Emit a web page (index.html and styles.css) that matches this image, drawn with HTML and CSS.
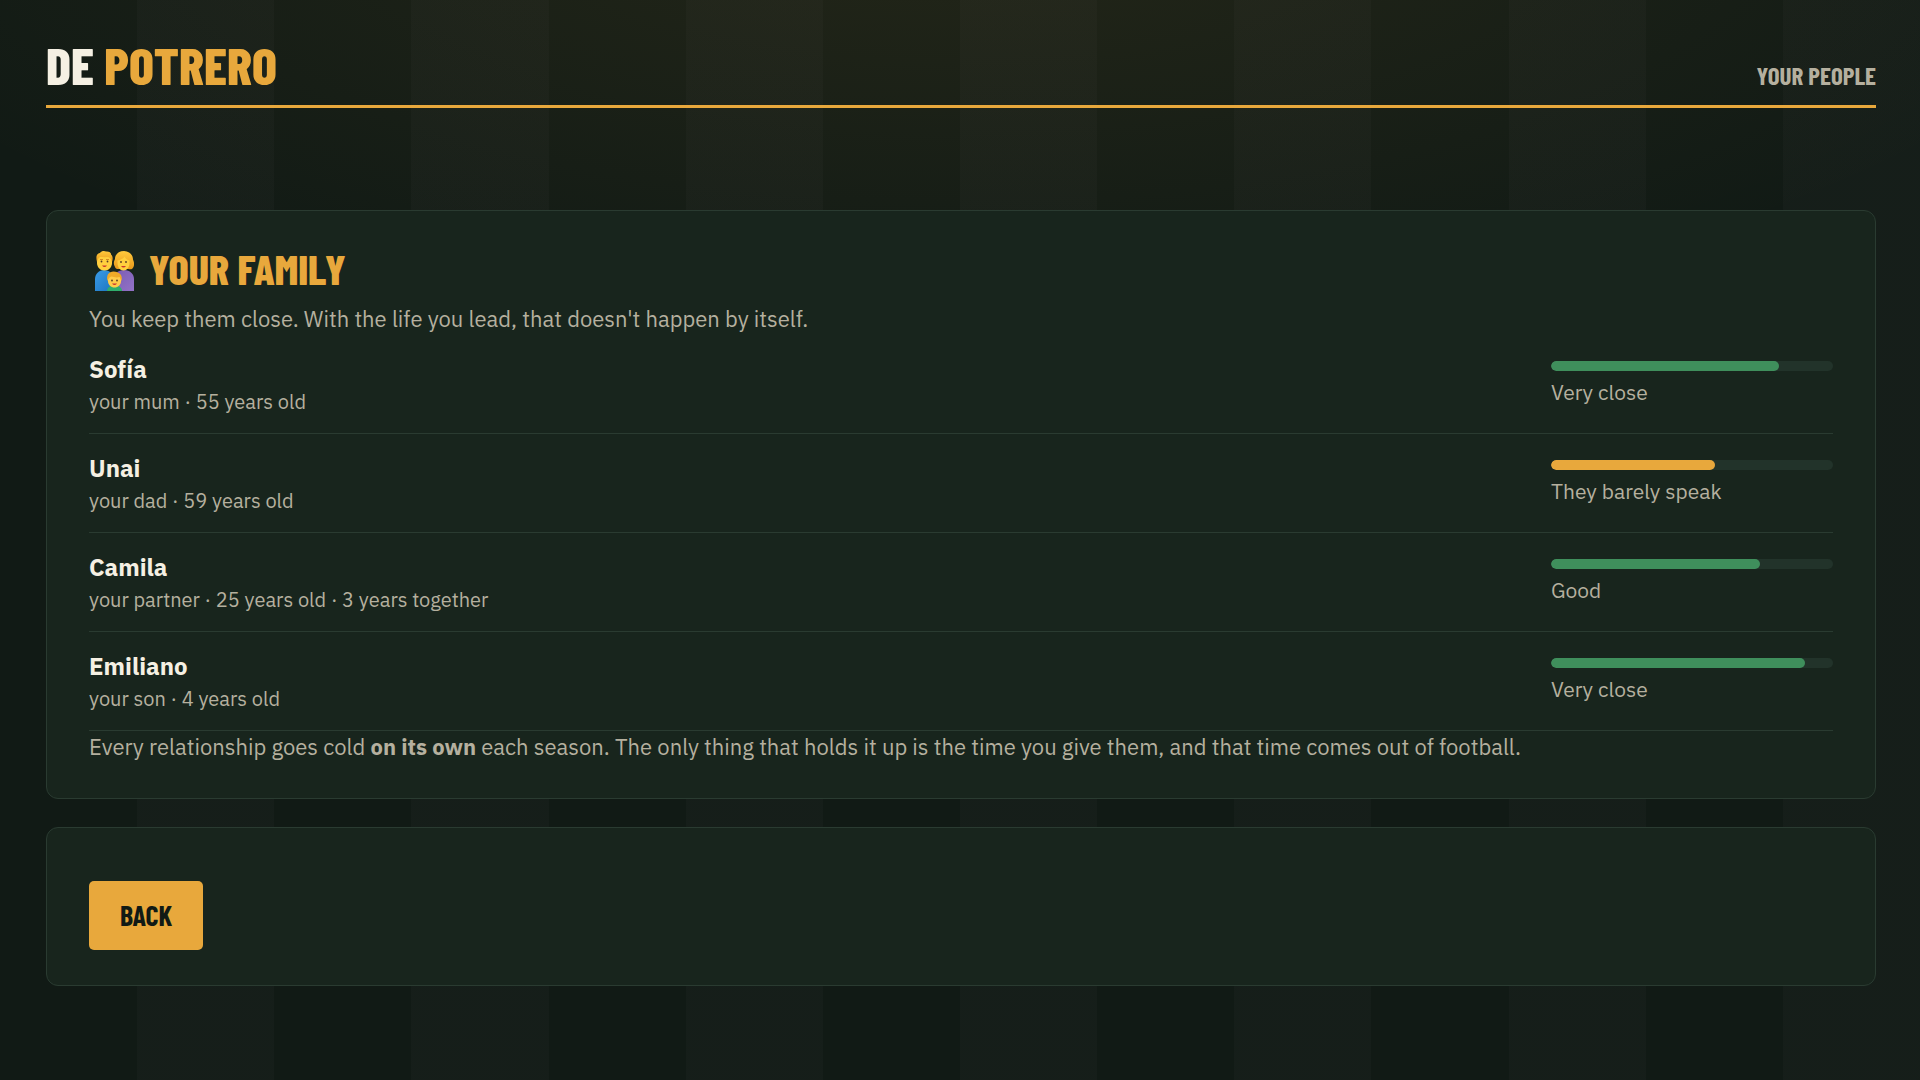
FILE: index.html
```html
<!DOCTYPE html>
<html lang="en">
<head>
    <meta charset="UTF-8">
    <meta name="viewport" content="width=device-width, initial-scale=1.0">
    <title>De Potrero</title>
    <link rel="stylesheet" href="styles.css">
</head>
<body>
    <header class="topbar">
        <h1 class="brand">DE <span>POTRERO</span></h1>
        <div class="section-name">YOUR PEOPLE</div>
    </header>

    <main>
        <section class="card">
            <h2 class="card-title">
                <svg class="family-icon" viewBox="0 0 40 40" aria-hidden="true">
                    <defs>
                        <linearGradient id="shirt" x1="0" y1="0" x2="1" y2="1">
                            <stop offset="0" stop-color="#3a9be6"/>
                            <stop offset="1" stop-color="#1b74c0"/>
                        </linearGradient>
                        <linearGradient id="dress" x1="0" y1="0" x2="1" y2="1">
                            <stop offset="0" stop-color="#7a5cb4"/>
                            <stop offset="1" stop-color="#9272c6"/>
                        </linearGradient>
                        <linearGradient id="hair" x1="0" y1="0" x2="0" y2="1">
                            <stop offset="0" stop-color="#ffc93c"/>
                            <stop offset="1" stop-color="#e8991c"/>
                        </linearGradient>
                    </defs>
                    <!-- dad -->
                    <path d="M1 40V28c0-5 4-9 9-9s10 4 10 9v12z" fill="url(#shirt)"/>
                    <path d="M3 5h15v7c0 4-3 7.500-7.500 7.500S3 16 3 12z" fill="#ffcf3e"/>
                    <path d="M3 11C1.500 5 3 2.500 6 2c1.500-2.500 5-2 6-1.500 3-.5 5.500 1.500 5 3C19 5 19 8 18 11 17.500 8 16 6 13 6c-3 .5-5 0-7 0C4 7 3.500 9 3 11z" fill="url(#hair)"/>
                    <!-- mum -->
                    <path d="M20 40V28c0-5 4-9 10-9s10 4 10 9v12z" fill="url(#dress)"/>
                    <path d="M21 16C19 13 20 10 21 8c0-5 4-8 9-8 5.500 0 9 4 9 8.500 1.500 3 1.500 7-.5 9-1 1-3 1-4 .5H24c-1.500 0-2.500-.5-3-2z" fill="url(#hair)"/>
                    <path d="M23.500 9.500c3-.5 6-2 7-4 1 2.500 3 3.500 5 4V12c0 4-2.500 7.500-6 7.500s-6-3.500-6-7.500z" fill="#ffcf3e"/>
                    <g fill="#5b3b23">
                        <circle cx="7.500" cy="10.500" r=".9"/>
                        <circle cx="13.500" cy="10.500" r=".9"/>
                        <circle cx="27" cy="11" r=".9"/>
                        <circle cx="32" cy="11" r=".9"/>
                    </g>
                    <path d="M6 8.500h3M12 8.500h3" stroke="#c47a1a" stroke-width=".8"/>
                    <path d="M8 14.500h5q-2.500 3-5 0zM27 15h5q-2.500 3-5 0z" fill="#c9342e"/>
                    <!-- kid -->
                    <path d="M13 40c0-3.500 3-5.500 7.500-5.500s7.500 2 7.500 5.500z" fill="#2fae6c"/>
                    <path d="M14 25h13v5c0 4-3 6.500-6.500 6.500S14 34 14 30z" fill="#ffcc4a"/>
                    <path d="M13.500 30c-1.500-6 1.500-9.500 6-9.500 5.500 0 9.500 3.500 8 9.500-1-1-1-3-2-4-3 1-6 0-8-.5-2 .5-3 2-4 4.500z" fill="#f0aa28"/>
                    <circle cx="18" cy="29.500" r=".9" fill="#5b3b23"/>
                    <circle cx="23" cy="29.500" r=".9" fill="#5b3b23"/>
                    <path d="M18 32.500h5q-2.500 3-5 0z" fill="#c9342e"/>
                </svg>
                YOUR FAMILY
            </h2>
            <p class="hint">You keep them close. With the life you lead, that doesn't happen by itself.</p>

            <ul class="people">
                <li class="person">
                    <div>
                        <div class="name">Sofía</div>
                        <div class="detail">your mum · 55 years old</div>
                    </div>
                    <div class="bond">
                        <div class="bar"><div class="fill" style="width: 81%"></div></div>
                        <div class="bond-label">Very close</div>
                    </div>
                </li>
                <li class="person">
                    <div>
                        <div class="name">Unai</div>
                        <div class="detail">your dad · 59 years old</div>
                    </div>
                    <div class="bond">
                        <div class="bar"><div class="fill cold" style="width: 58%"></div></div>
                        <div class="bond-label">They barely speak</div>
                    </div>
                </li>
                <li class="person">
                    <div>
                        <div class="name">Camila</div>
                        <div class="detail">your partner · 25 years old · 3 years together</div>
                    </div>
                    <div class="bond">
                        <div class="bar"><div class="fill" style="width: 74%"></div></div>
                        <div class="bond-label">Good</div>
                    </div>
                </li>
                <li class="person">
                    <div>
                        <div class="name">Emiliano</div>
                        <div class="detail">your son · 4 years old</div>
                    </div>
                    <div class="bond">
                        <div class="bar"><div class="fill" style="width: 90%"></div></div>
                        <div class="bond-label">Very close</div>
                    </div>
                </li>
            </ul>

            <p class="hint">Every relationship goes cold <b>on its own</b> each season. The only thing that holds it up is the time you give them, and that time comes out of football.</p>
        </section>

        <section class="card">
            <button type="button" class="btn">BACK</button>
        </section>
    </main>
</body>
</html>
```
FILE: styles.css
```css
:root {
    --gold: #e8a83c;
    --green: #3f8f5c;
    --cream: #f5f0e3;
    --muted: #b5b09f;
    --card: #18251d;
    --line: #2a3b31;
    --stripe: calc(100% / 14);
}
* {
    box-sizing: border-box;
}
body {
    margin: 0;
    min-height: 100vh;
    padding: 38px 44px 38px 46px;
    font-family: 'IBM Plex Sans', 'Open Sans', sans-serif;
    font-size: 22px;
    line-height: 32px;
    color: var(--cream);
    background:
        radial-gradient(120% 80% at 50% -10%, rgba(232, 168, 60, 0.09), transparent 52%),
        repeating-linear-gradient(90deg, transparent 0 var(--stripe), rgba(255, 255, 255, 0.02) var(--stripe) calc(var(--stripe) * 2)),
        #111a15;
}
h1, h2, p, ul {
    margin: 0;
    padding: 0;
}
.topbar {
    display: flex;
    justify-content: space-between;
    align-items: baseline;
    padding-bottom: 14px;
    margin-bottom: 102px;
    border-bottom: 3px solid var(--gold);
}
.brand, .section-name, .card-title, .btn {
    font-family: 'Barlow Condensed', 'Open Sans Condensed', sans-serif;
}
.brand {
    font-size: 52px;
    font-weight: 800;
    line-height: 52px;
}
.brand span {
    color: var(--gold);
}
.section-name {
    font-size: 25px;
    font-weight: 700;
    line-height: 32px;
    color: var(--muted);
}
.card {
    background-color: var(--card);
    border: 1px solid var(--line);
    border-radius: 12px;
    padding: 35px 42px;
    margin-bottom: 28px;
}
.card-title {
    display: flex;
    align-items: flex-end;
    gap: 15px;
    padding-left: 5px;
    margin-bottom: 12px;
    font-size: 42px;
    font-weight: 800;
    line-height: 45px;
    color: var(--gold);
}
.family-icon {
    width: 40px;
    height: 40px;
}
.hint {
    color: var(--muted);
}
.people {
    list-style: none;
}
.person {
    display: flex;
    justify-content: space-between;
    align-items: center;
    padding: 16px 0;
    border-bottom: 1px solid var(--line);
}
.name {
    font-size: 24px;
    font-weight: 700;
    line-height: 36px;
}
.detail {
    font-size: 20px;
    line-height: 30px;
    color: var(--muted);
}
.bond {
    width: 282px;
}
.bar {
    height: 10px;
    margin-bottom: 6px;
    border-radius: 5px;
    background-color: #22332a;
    overflow: hidden;
}
.fill {
    height: 100%;
    border-radius: 5px;
    background-color: var(--green);
}
.fill.cold {
    background-color: var(--gold);
}
.bond-label {
    font-size: 21px;
    line-height: 30px;
    color: var(--muted);
}
.btn {
    display: block;
    margin-top: 18px;
    padding: 18px 31px;
    border: none;
    border-radius: 5px;
    background-color: var(--gold);
    color: #111a15;
    font-size: 28px;
    font-weight: 700;
    line-height: 33px;
    cursor: pointer;
}
```
